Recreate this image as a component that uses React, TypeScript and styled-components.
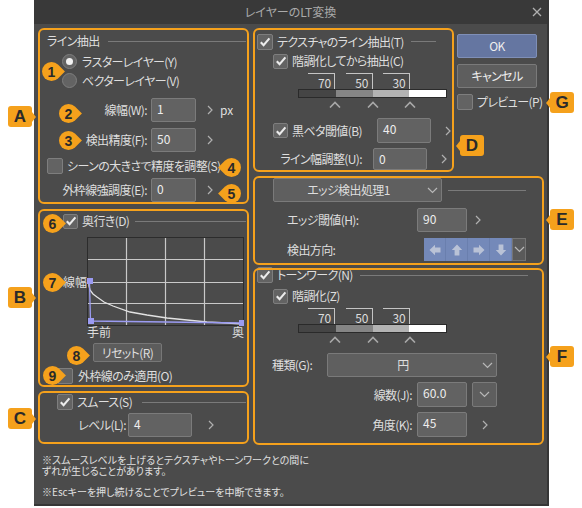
import React from 'react';
import styled, { createGlobalStyle } from 'styled-components';

const ORANGE = '#f5a11c';
const TEXT = '#dedede';
const FIELD_BG = '#626262';
const FIELD_BORDER = '#7b7b7b';

const GlobalStyle = createGlobalStyle`
  html, body { margin: 0; padding: 0; background: #ffffff; }
  body { font-family: "Noto Sans CJK JP", "Noto Sans", sans-serif; }
  * { box-sizing: border-box; }
`;

const Page = styled.div`
  position: relative;
  width: 582px;
  height: 508px;
  padding-left: 34px;
  overflow: hidden;
`;

const Dialog = styled.div`
  width: 515px;
  height: 506px;
  background: #4b4b4b;
  border-right: 2px solid #363636;
  border-bottom: 2px solid #363636;
  display: flex;
  flex-direction: column;
  color: ${TEXT};
  font-size: 12px;
  line-height: 14px;
  letter-spacing: -0.6px;
  font-feature-settings: "palt" 1;
`;

const TitleBar = styled.div`
  height: 24px;
  flex-shrink: 0;
  background: #393939;
  display: grid;
  grid-template-columns: 1fr auto 1fr;
  align-items: center;
  color: #aaaaaa;
  letter-spacing: 0;
`;

const TitleText = styled.span`
  grid-column: 2;
`;

const CloseBox = styled.span`
  grid-column: 3;
  justify-self: end;
  margin-right: 5px;
  display: flex;
`;

const Body = styled.div`
  flex: 1;
  padding: 4px 3px 0 4px;
  display: flex;
  flex-direction: column;
`;

const Main = styled.div`
  display: grid;
  grid-template-columns: 211px 291px;
  column-gap: 4px;
`;

const Column = styled.div`
  display: flex;
  flex-direction: column;
`;

const TopRight = styled.div`
  display: flex;
`;

const GroupBox = styled.div<{ $h: number; $w?: number; $mt?: number }>`
  position: relative;
  height: ${p => p.$h}px;
  width: ${p => (p.$w ? `${p.$w}px` : 'auto')};
  margin-top: ${p => p.$mt ?? 0}px;
  padding: 2px;
  display: flex;
  flex-direction: column;
  flex-shrink: 0;
  &::after {
    content: '';
    position: absolute;
    inset: 0;
    border: 2px solid ${ORANGE};
    border-radius: 6px;
    pointer-events: none;
  }
`;

const Row = styled.div<{ $h?: number; $mt?: number; $pl?: number }>`
  display: flex;
  align-items: center;
  flex-shrink: 0;
  height: ${p => p.$h ?? 24}px;
  margin-top: ${p => p.$mt ?? 0}px;
  padding-left: ${p => p.$pl ?? 0}px;
  white-space: nowrap;
`;

const HeaderLine = styled.span<{ $ml: number; $mr: number }>`
  flex: 1;
  height: 1px;
  background: #7a7a7a;
  margin-left: ${p => p.$ml}px;
  margin-right: ${p => p.$mr}px;
`;

const Label = styled.span<{ $w?: number; $align?: 'left' | 'right'; $ml?: number }>`
  display: inline-block;
  flex-shrink: 0;
  width: ${p => (p.$w ? `${p.$w}px` : 'auto')};
  text-align: ${p => p.$align ?? 'left'};
  margin-left: ${p => p.$ml ?? 0}px;
  white-space: nowrap;
`;

const Field = styled.div<{ $w: number; $ml?: number }>`
  width: ${p => p.$w}px;
  height: 100%;
  margin-left: ${p => p.$ml ?? 0}px;
  flex-shrink: 0;
  background: ${FIELD_BG};
  border: 1px solid ${FIELD_BORDER};
  border-radius: 2px;
  padding: 3px 0 0 5px;
  font-size: 12px;
  line-height: 14px;
  letter-spacing: 0;
  color: #eeeeee;
`;

const ChevronBox = styled.span<{ $ml: number }>`
  display: flex;
  margin-left: ${p => p.$ml}px;
  flex-shrink: 0;
`;

const Unit = styled.span<{ $ml: number }>`
  margin-left: ${p => p.$ml}px;
  letter-spacing: 0;
`;

const CheckBoxFrame = styled.span<{ $size: number }>`
  width: ${p => p.$size}px;
  height: ${p => p.$size}px;
  flex-shrink: 0;
  background: #636363;
  border: 1px solid #7e7e7e;
  border-radius: 2px;
  display: inline-flex;
  align-items: center;
  justify-content: center;
`;

const RadioCircle = styled.span<{ $on: boolean }>`
  width: 15px;
  height: 15px;
  flex-shrink: 0;
  border-radius: 50%;
  background: #636363;
  border: 1px solid #7e7e7e;
  display: inline-flex;
  align-items: center;
  justify-content: center;
  &::after {
    content: '';
    width: 7px;
    height: 7px;
    border-radius: 50%;
    background: #f2f2f2;
    display: ${p => (p.$on ? 'block' : 'none')};
  }
`;

const ButtonsCol = styled.div`
  width: 80px;
  margin-left: 3px;
  display: flex;
  flex-direction: column;
`;

const DialogButton = styled.div<{ $primary?: boolean; $mt?: number }>`
  height: 24px;
  margin-top: ${p => p.$mt ?? 0}px;
  border-radius: 2px;
  background: ${p => (p.$primary ? '#6576a1' : '#5e5e5e')};
  border: 1px solid ${p => (p.$primary ? '#7f8fb7' : '#7a7a7a')};
  display: flex;
  align-items: center;
  justify-content: center;
  color: #eeeeee;
`;

const SmallButton = styled.div<{ $w: number; $ml: number; $mt: number }>`
  width: ${p => p.$w}px;
  height: 19px;
  margin-left: ${p => p.$ml}px;
  margin-top: ${p => p.$mt}px;
  flex-shrink: 0;
  border-radius: 2px;
  background: #5c5c5c;
  border: 1px solid #777777;
  display: flex;
  align-items: center;
  justify-content: center;
`;

const IconButton = styled.div<{ $w: number; $ml: number }>`
  width: ${p => p.$w}px;
  height: 100%;
  margin-left: ${p => p.$ml}px;
  background: #5e5e5e;
  border: 1px solid #7a7a7a;
  border-radius: 2px;
  display: flex;
  align-items: center;
  justify-content: center;
`;

const Select = styled.div<{ $w: number }>`
  width: ${p => p.$w}px;
  height: 100%;
  flex-shrink: 0;
  background: #5f5f5f;
  border: 1px solid #7a7a7a;
  border-radius: 2px;
  display: flex;
  align-items: center;
`;

const SelectText = styled.span`
  flex: 1;
  text-align: center;
`;

const SelectChevron = styled.span`
  width: 18px;
  display: flex;
  justify-content: center;
`;

/* level (gradation) widget */
const Level = styled.div<{ $ml: number; $mt: number }>`
  display: grid;
  grid-template-columns: repeat(4, 1fr);
  grid-template-rows: 16px 9px 12px;
  width: 149px;
  margin-left: ${p => p.$ml}px;
  margin-top: ${p => p.$mt}px;
  flex-shrink: 0;
`;

const Bracket = styled.div`
  justify-self: end;
  width: 27px;
  border-top: 1px solid #c4c4c4;
  border-right: 1px solid #c4c4c4;
  text-align: right;
  padding: 3px 3px 0 0;
  font-size: 12px;
  line-height: 12px;
  letter-spacing: 0;
  color: #dddddd;
`;

const Bar = styled.div`
  grid-column: 1 / -1;
  display: flex;
  border: 1px solid #2a2a2a;
`;

const BarSeg = styled.span<{ $c: string }>`
  flex: 1;
  background: ${p => p.$c};
`;

const Caret = styled.span`
  justify-self: end;
  margin-right: -6px;
  padding-top: 3px;
  display: flex;
`;

/* graph */
const GraphRow = styled.div`
  display: flex;
  margin-top: 6px;
  height: 89px;
  padding-left: 23px;
  flex-shrink: 0;
`;

const AxisSide = styled.span`
  width: 24px;
  padding-top: 38px;
  white-space: nowrap;
  letter-spacing: 0;
`;

const AxisRow = styled.div`
  display: flex;
  justify-content: space-between;
  width: 157px;
  margin-left: 47px;
  height: 12px;
  line-height: 12px;
  letter-spacing: 0;
  flex-shrink: 0;
`;

/* direction control */
const DirControl = styled.div`
  display: flex;
  width: 102px;
  height: 100%;
`;

const DirCell = styled.span`
  width: 22px;
  height: 100%;
  background: #7489b9;
  border-right: 1px solid #6a7fae;
  display: flex;
  align-items: center;
  justify-content: center;
`;

const DirDrop = styled.span`
  flex: 1;
  height: 100%;
  background: #5a5a5a;
  border: 1px solid #747474;
  display: flex;
  align-items: center;
  justify-content: center;
`;

/* notes */
const Notes = styled.div`
  margin-top: 9px;
  padding-left: 4px;
  font-size: 10px;
  line-height: 11px;
  letter-spacing: 0;
  color: #e0e0e0;
`;

const NoteP = styled.p<{ $mt?: number }>`
  margin: ${p => p.$mt ?? 0}px 0 0;
`;

/* annotations */
const Marker = styled.div<{ $x: number; $y: number; $dir: 'l' | 'r' }>`
  position: absolute;
  left: ${p => p.$x - 9.5}px;
  top: ${p => p.$y - 9.5}px;
  width: 19px;
  height: 19px;
  background: ${ORANGE};
  border-radius: ${p => (p.$dir === 'r' ? '50% 0 50% 50%' : '50% 50% 50% 0')};
  transform: rotate(45deg);
  display: flex;
  align-items: center;
  justify-content: center;
`;

const MarkerNum = styled.span`
  transform: rotate(-45deg);
  font-family: "Liberation Sans", Arial, sans-serif;
  font-weight: bold;
  font-size: 14px;
  line-height: 14px;
  color: #2a2a2a;
`;

const Badge = styled.div<{ $x: number; $y: number; $dir: 'l' | 'r' }>`
  position: absolute;
  left: ${p => p.$x}px;
  top: ${p => p.$y}px;
  width: 24px;
  height: 21px;
  background: ${ORANGE};
  border-radius: 3px;
  display: flex;
  align-items: center;
  justify-content: center;
  font-family: "Liberation Sans", Arial, sans-serif;
  font-weight: bold;
  font-size: 17px;
  color: #2a2a2a;
  &::after {
    content: '';
    position: absolute;
    top: 50%;
    margin-top: -5px;
    border-top: 5px solid transparent;
    border-bottom: 5px solid transparent;
    ${p =>
      p.$dir === 'r'
        ? `left: 100%; border-left: 4px solid ${ORANGE};`
        : `right: 100%; border-right: 4px solid ${ORANGE};`}
  }
`;

/* icons */
const ChevRight = () => (
  <svg width="6" height="10" viewBox="0 0 6 10">
    <polyline points="1,1 5,5 1,9" fill="none" stroke="#b0b0b0" strokeWidth="1.2" />
  </svg>
);

const ChevDown = () => (
  <svg width="11" height="7" viewBox="0 0 11 7">
    <polyline points="1,1 5.5,5.5 10,1" fill="none" stroke="#b8b8b8" strokeWidth="1.2" />
  </svg>
);

const CaretUp = () => (
  <svg width="12" height="7" viewBox="0 0 12 7">
    <polyline points="1,6.5 6,1.5 11,6.5" fill="none" stroke="#a8a8a8" strokeWidth="1.6" />
  </svg>
);

const CloseIcon = () => (
  <svg width="10" height="10" viewBox="0 0 10 10">
    <path d="M1 1 L9 9 M9 1 L1 9" stroke="#b0b0b0" strokeWidth="1.3" />
  </svg>
);

const Arrow = ({ rot }: { rot: number }) => (
  <svg width="12" height="12" viewBox="0 0 12 12" transform={`rotate(${rot})`}>
    <path d="M0.5 6 L6 0.8 L6 3.6 L11.5 3.6 L11.5 8.4 L6 8.4 L6 11.2 Z" fill="#b9c2d6" />
  </svg>
);

function Check({ checked, size = 16 }: { checked?: boolean; size?: number }) {
  return (
    <CheckBoxFrame $size={size}>
      {checked && (
        <svg width="12" height="12" viewBox="0 0 12 12">
          <polyline points="1.8,6.2 4.6,9.2 10.4,2.4" fill="none" stroke="#ececec" strokeWidth="2.1" />
        </svg>
      )}
    </CheckBoxFrame>
  );
}

function LevelWidget({ ml, mt }: { ml: number; mt: number }) {
  return (
    <Level $ml={ml} $mt={mt}>
      <Bracket>70</Bracket>
      <Bracket>50</Bracket>
      <Bracket>30</Bracket>
      <Bar>
        <BarSeg $c="#454545" />
        <BarSeg $c="#858585" />
        <BarSeg $c="#b3b3b3" />
        <BarSeg $c="#ffffff" />
      </Bar>
      <Caret><CaretUp /></Caret>
      <Caret><CaretUp /></Caret>
      <Caret><CaretUp /></Caret>
    </Level>
  );
}

function DepthGraph() {
  const curve = [
    [2, 45], [2, 49], [3, 53], [6, 57], [10, 60], [17, 65], [26, 69], [43, 75],
    [60, 78], [80, 81], [100, 83], [120, 85], [140, 86], [156, 87],
  ]
    .map(p => p.join(','))
    .join(' ');
  return (
    <svg width="157" height="89" viewBox="0 0 157 89">
      <g stroke="#c9c9c9" strokeWidth="1.2">
        <line x1="39.5" y1="1" x2="39.5" y2="88" />
        <line x1="78.5" y1="1" x2="78.5" y2="88" />
        <line x1="117.5" y1="1" x2="117.5" y2="88" />
        <line x1="1" y1="22.5" x2="156" y2="22.5" />
        <line x1="1" y1="45.5" x2="156" y2="45.5" />
        <line x1="1" y1="66.5" x2="156" y2="66.5" />
      </g>
      <rect x="0.5" y="0.5" width="156" height="88" fill="none" stroke="#2c2c2c" />
      <polyline points={curve} fill="none" stroke="#e2e2e2" strokeWidth="1.3" />
      <polyline points="2.5,45 3.5,84 155,86" fill="none" stroke="#9b9bf2" strokeWidth="1.3" />
      <rect x="0" y="41" width="6" height="6" fill="#9b9bf2" />
      <rect x="1" y="81" width="6" height="6" fill="#9b9bf2" />
      <rect x="152" y="83" width="6" height="6" fill="#9b9bf2" />
    </svg>
  );
}

export default function App() {
  return (
    <Page>
      <GlobalStyle />
      <Dialog>
        <TitleBar>
          <TitleText>レイヤーのLT変換</TitleText>
          <CloseBox><CloseIcon /></CloseBox>
        </TitleBar>
        <Body>
          <Main>
            <Column>
              {/* A */}
              <GroupBox $h={176}>
                <Row $h={22} $pl={7}>
                  <span>ライン抽出</span>
                  <HeaderLine $ml={8} $mr={1} />
                </Row>
                <Row $h={19} $pl={22}>
                  <RadioCircle $on />
                  <Label $ml={5}>ラスターレイヤー(Y)</Label>
                </Row>
                <Row $h={19} $pl={22}>
                  <RadioCircle $on={false} />
                  <Label $ml={5}>ベクターレイヤー(V)</Label>
                </Row>
                <Row $mt={8}>
                  <Label $w={107} $align="right">線幅(W):</Label>
                  <Field $w={45} $ml={4}>1</Field>
                  <ChevronBox $ml={11}><ChevRight /></ChevronBox>
                  <Unit $ml={7}>px</Unit>
                </Row>
                <Row $mt={6}>
                  <Label $w={107} $align="right">検出精度(F):</Label>
                  <Field $w={45} $ml={4}>50</Field>
                  <ChevronBox $ml={11}><ChevRight /></ChevronBox>
                </Row>
                <Row $h={16} $mt={6} $pl={7}>
                  <Check />
                  <Label $ml={4}>シーンの大きさで精度を調整(S)</Label>
                </Row>
                <Row $mt={4}>
                  <Label $w={107} $align="right">外枠線強調度(E):</Label>
                  <Field $w={45} $ml={4}>0</Field>
                  <ChevronBox $ml={11}><ChevRight /></ChevronBox>
                </Row>
              </GroupBox>

              {/* B */}
              <GroupBox $h={178} $mt={5}>
                <Row $h={20} $pl={23}>
                  <Check checked size={15} />
                  <Label $ml={4}>奥行き(D)</Label>
                  <HeaderLine $ml={6} $mr={1} />
                </Row>
                <GraphRow>
                  <AxisSide>線幅</AxisSide>
                  <DepthGraph />
                </GraphRow>
                <AxisRow>
                  <span>手前</span>
                  <span>奥</span>
                </AxisRow>
                <SmallButton $w={69} $ml={53} $mt={5}>リセット(R)</SmallButton>
                <Row $h={16} $mt={6} $pl={17}>
                  <Check />
                  <Label $ml={5}>外枠線のみ適用(O)</Label>
                </Row>
              </GroupBox>

              {/* C */}
              <GroupBox $h={53} $mt={4}>
                <Row $h={18} $pl={17}>
                  <Check checked />
                  <Label $ml={4}>スムース(S)</Label>
                  <HeaderLine $ml={10} $mr={1} />
                </Row>
                <Row $mt={2}>
                  <Label $w={86} $align="right">レベル(L):</Label>
                  <Field $w={64} $ml={2}>4</Field>
                  <ChevronBox $ml={16}><ChevRight /></ChevronBox>
                </Row>
              </GroupBox>
            </Column>

            <Column>
              <TopRight>
                {/* D */}
                <GroupBox $h={144} $w={201}>
                  <Row $h={23} $pl={2}>
                    <Check checked />
                    <Label $ml={4}>テクスチャのライン抽出(T)</Label>
                    <HeaderLine $ml={7} $mr={16} />
                  </Row>
                  <Row $h={16} $pl={18}>
                    <Check checked size={15} />
                    <Label $ml={4}>階調化してから抽出(C)</Label>
                  </Row>
                  <LevelWidget ml={43} mt={4} />
                  <Row $h={25} $mt={8} $pl={18}>
                    <Check checked size={15} />
                    <Label $w={85} $ml={4}>黒ベタ閾値(B)</Label>
                    <Field $w={54}>40</Field>
                    <ChevronBox $ml={14}><ChevRight /></ChevronBox>
                  </Row>
                  <Row $h={22} $mt={5}>
                    <Label $w={107} $align="right">ライン幅調整(U):</Label>
                    <Field $w={54} $ml={11}>0</Field>
                    <ChevronBox $ml={14}><ChevRight /></ChevronBox>
                  </Row>
                </GroupBox>
                <ButtonsCol>
                  <DialogButton $primary $mt={6}>OK</DialogButton>
                  <DialogButton $mt={6}>キャンセル</DialogButton>
                  <Row $h={16} $mt={6}>
                    <Check />
                    <Label $ml={4}>プレビュー(P)</Label>
                  </Row>
                </ButtonsCol>
              </TopRight>

              {/* E */}
              <GroupBox $h={89} $mt={4}>
                <Row $pl={18}>
                  <Select $w={169}>
                    <SelectText>エッジ検出処理1</SelectText>
                    <SelectChevron><ChevDown /></SelectChevron>
                  </Select>
                  <HeaderLine $ml={6} $mr={16} />
                </Row>
                <Row $mt={6} $pl={32}>
                  <Label $w={130}>エッジ閾値(H):</Label>
                  <Field $w={50}>90</Field>
                  <ChevronBox $ml={8}><ChevRight /></ChevronBox>
                </Row>
                <Row $h={23} $mt={6} $pl={32}>
                  <Label $w={137}>検出方向:</Label>
                  <DirControl>
                    <DirCell><Arrow rot={0} /></DirCell>
                    <DirCell><Arrow rot={90} /></DirCell>
                    <DirCell><Arrow rot={180} /></DirCell>
                    <DirCell><Arrow rot={270} /></DirCell>
                    <DirDrop><ChevDown /></DirDrop>
                  </DirControl>
                </Row>
              </GroupBox>

              {/* F */}
              <GroupBox $h={177} $mt={3}>
                <Row $h={10} $pl={2}>
                  <Check checked />
                  <Label $ml={4}>トーンワーク(N)</Label>
                  <HeaderLine $ml={7} $mr={14} />
                </Row>
                <Row $h={16} $mt={8} $pl={18}>
                  <Check checked size={15} />
                  <Label $ml={4}>階調化(Z)</Label>
                </Row>
                <LevelWidget ml={43} mt={4} />
                <Row $mt={8} $pl={17}>
                  <Label $w={55}>種類(G):</Label>
                  <Select $w={170}>
                    <SelectText>円</SelectText>
                    <SelectChevron><ChevDown /></SelectChevron>
                  </Select>
                </Row>
                <Row $h={25} $mt={5}>
                  <Label $w={157} $align="right">線数(J):</Label>
                  <Field $w={50} $ml={5}>60.0</Field>
                  <IconButton $w={25} $ml={5}><ChevDown /></IconButton>
                </Row>
                <Row $h={25} $mt={5}>
                  <Label $w={157} $align="right">角度(K):</Label>
                  <Field $w={50} $ml={5}>45</Field>
                  <ChevronBox $ml={15}><ChevRight /></ChevronBox>
                </Row>
              </GroupBox>
            </Column>
          </Main>

          <Notes>
            <NoteP>
              ※スムースレベルを上げるとテクスチャやトーンワークとの間に
              <br />
              ずれが生じることがあります。
            </NoteP>
            <NoteP $mt={10}>※Escキーを押し続けることでプレビューを中断できます。</NoteP>
          </Notes>
        </Body>
      </Dialog>

      <Badge $x={8} $y={106} $dir="r">A</Badge>
      <Badge $x={8} $y={287} $dir="r">B</Badge>
      <Badge $x={8} $y={408} $dir="r">C</Badge>
      <Badge $x={460} $y={135} $dir="l">D</Badge>
      <Badge $x={550} $y={209} $dir="l">E</Badge>
      <Badge $x={550} $y={346} $dir="l">F</Badge>
      <Badge $x={550} $y={92} $dir="l">G</Badge>

      <Marker $x={51.5} $y={71} $dir="r"><MarkerNum>1</MarkerNum></Marker>
      <Marker $x={68} $y={113} $dir="r"><MarkerNum>2</MarkerNum></Marker>
      <Marker $x={68} $y={140} $dir="r"><MarkerNum>3</MarkerNum></Marker>
      <Marker $x={231} $y={167} $dir="l"><MarkerNum>4</MarkerNum></Marker>
      <Marker $x={231} $y={193} $dir="l"><MarkerNum>5</MarkerNum></Marker>
      <Marker $x={52} $y={223} $dir="r"><MarkerNum>6</MarkerNum></Marker>
      <Marker $x={52} $y={282} $dir="r"><MarkerNum>7</MarkerNum></Marker>
      <Marker $x={76} $y={355} $dir="r"><MarkerNum>8</MarkerNum></Marker>
      <Marker $x={52} $y={375} $dir="r"><MarkerNum>9</MarkerNum></Marker>
    </Page>
  );
}
